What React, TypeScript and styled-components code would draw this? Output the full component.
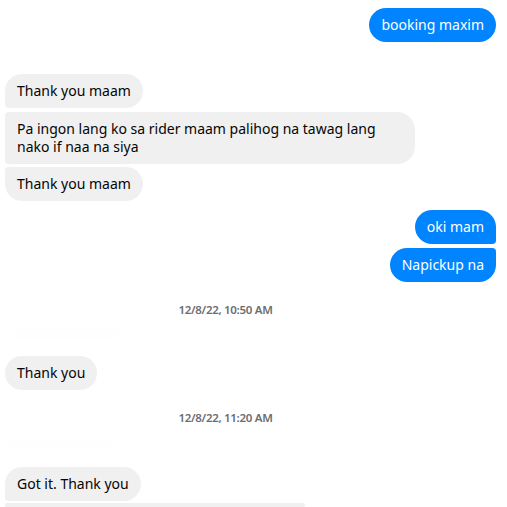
import styled, {createGlobalStyle, css} from "styled-components";

const GlobalStyle = createGlobalStyle`
  html, body {
    margin: 0;
    padding: 0;
    background: #fff;
    overflow: hidden;
  }
  body {
    font-family: "Noto Sans", "Open Sans", "Liberation Sans", sans-serif;
  }
`

const Thread = styled.div`
  display: flex;
  flex-direction: column;
  width: 507px;
  height: 507px;
  padding: 8px 11px 0 5px;
  box-sizing: border-box;
  overflow: hidden;
`

const Row = styled.div<{ $mine?: boolean, $gap: number }>`
  display: flex;
  justify-content: ${p => p.$mine ? 'flex-end' : 'flex-start'};
  margin-top: ${p => p.$gap}px;
`

type Pos = 'single' | 'first' | 'middle' | 'last'

const corners = (mine: boolean, pos: Pos) => {
    const big = 18, small = 4
    const top = pos === 'single' || pos === 'first' ? big : small
    const bottom = pos === 'single' || pos === 'last' ? big : small
    return mine
        ? css`border-radius: ${big}px ${top}px ${bottom}px ${big}px;`
        : css`border-radius: ${top}px ${big}px ${big}px ${bottom}px;`
}

const Bubble = styled.div<{ $mine?: boolean, $pos: Pos }>`
  max-width: 410px;
  box-sizing: border-box;
  padding: 8px 12px;
  font-size: 14px;
  line-height: 18px;
  color: ${p => p.$mine ? '#fff' : '#050505'};
  background: ${p => p.$mine ? '#0084ff' : '#f0f0f0'};
  ${p => corners(!!p.$mine, p.$pos)}
`

const CutBubble = styled.div`
  width: 300px;
  height: 34px;
  background: #f0f0f0;
  border-radius: 18px 18px 18px 4px;
  margin-top: 2px;
`

const Stamp = styled.div<{ $gap: number }>`
  margin-top: ${p => p.$gap}px;
  margin-right: 50px;
  text-align: center;
  font-size: 11.5px;
  letter-spacing: -0.3px;
  line-height: 16px;
  font-weight: 600;
  color: #6b6d71;
`

const Ghost = styled.div<{ $gap: number, $w: number }>`
  margin-top: ${p => p.$gap}px;
  margin-left: 6px;
  width: ${p => p.$w}px;
  height: 24px;
  background: #fbfbfb;
  border-radius: 8px;
  filter: blur(3px);
`

const App = () => {
    return <>
        <GlobalStyle/>
        <Thread>
            <Row $mine $gap={0}><Bubble $mine $pos={'single'}>booking maxim</Bubble></Row>
            <Row $gap={32}><Bubble $pos={'first'}>Thank you maam</Bubble></Row>
            <Row $gap={4}><Bubble $pos={'middle'}>Pa ingon lang ko sa rider maam palihog na tawag lang nako if naa na siya</Bubble></Row>
            <Row $gap={3}><Bubble $pos={'last'}>Thank you maam</Bubble></Row>
            <Row $mine $gap={9}><Bubble $mine $pos={'first'}>oki mam</Bubble></Row>
            <Row $mine $gap={4}><Bubble $mine $pos={'last'}>Napickup na</Bubble></Row>
            <Stamp $gap={20}>12/8/22, 10:50 AM</Stamp>
            <Ghost $gap={14} $w={110}/>
            <Row $gap={21}><Bubble $pos={'single'}>Thank you</Bubble></Row>
            <Stamp $gap={20}>12/8/22, 11:20 AM</Stamp>
            <Ghost $gap={16} $w={100}/>
            <Row $gap={22}><Bubble $pos={'first'}>Got it. Thank you</Bubble></Row>
            <CutBubble/>
        </Thread>
    </>
}

export default App
